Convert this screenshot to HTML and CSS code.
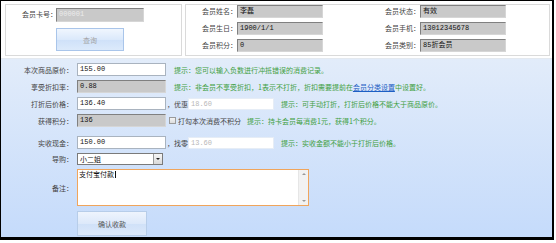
FILE: index.html
```html
<!DOCTYPE html>
<html>
<head>
  <meta charset="utf-8">
  <title>会员收款</title>
  <link rel="stylesheet" href="styles.css">
</head>
<body>
  <div class="frame">
    <div class="top">
      <div class="card-box">
        <span class="label">会员卡号：</span>
        <div class="field field-gray field-muted">000001</div>
        <button class="query-button">查询</button>
      </div>

      <div class="member-box">
        <div class="member-item">
          <span class="label">会员姓名：</span>
          <div class="field field-gray">李磊</div>
        </div>
        <div class="member-item">
          <span class="label">会员状态：</span>
          <div class="field field-gray">有效</div>
        </div>
        <div class="member-item">
          <span class="label">会员生日：</span>
          <div class="field field-gray">1900/1/1</div>
        </div>
        <div class="member-item">
          <span class="label">会员手机：</span>
          <div class="field field-gray">13012345678</div>
        </div>
        <div class="member-item">
          <span class="label">会员积分：</span>
          <div class="field field-gray">0</div>
        </div>
        <div class="member-item">
          <span class="label">会员类别：</span>
          <div class="field field-gray">85折会员</div>
        </div>
      </div>
    </div>

    <div class="pay">
      <div class="pay-row">
        <span class="pay-label">本次商品原价：</span>
        <div class="field field-white pay-input">155.00</div>
        <span class="hint">提示：您可以输入负数进行冲抵错误的消费记录。</span>
      </div>

      <div class="pay-row">
        <span class="pay-label">享受折扣率：</span>
        <div class="field field-gray pay-input">0.88</div>
        <span class="hint">提示：非会员不享受折扣，1表示不打折，折扣需要提前在<a href="#" class="hint-link">会员分类设置</a>中设置好。</span>
      </div>

      <div class="pay-row">
        <span class="pay-label">打折后价格：</span>
        <div class="field field-white pay-input">136.40</div>
        <span class="sub-label">，优惠</span>
        <div class="field field-plain sub-input">18.60</div>
        <span class="hint hint-far">提示：可手动打折，打折后价格不能大于商品原价。</span>
      </div>

      <div class="pay-row">
        <span class="pay-label">获得积分：</span>
        <div class="field field-gray pay-input">136</div>
        <span class="check-box"></span>
        <span class="check-text">打勾本次消费不积分</span>
        <span class="hint hint-check">提示：持卡会员每消费1元，获得1个积分。</span>
      </div>

      <div class="pay-row row-cash">
        <span class="pay-label">实收现金：</span>
        <div class="field field-white pay-input">150.00</div>
        <span class="sub-label">，找零</span>
        <div class="field field-plain sub-input">13.60</div>
        <span class="hint hint-far">提示：实收金额不能小于打折后价格。</span>
      </div>

      <div class="pay-row row-select">
        <span class="pay-label">导购：</span>
        <div class="select-box">
          <span class="select-text">小二姐</span>
          <span class="select-arrow"></span>
        </div>
      </div>

      <div class="pay-row row-memo">
        <span class="pay-label">备注：</span>
        <div class="memo">
          <span class="memo-text">支付宝付款<span class="caret"></span></span>
          <span class="memo-scroll">
            <span class="scroll-up"></span>
            <span class="scroll-down"></span>
          </span>
        </div>
      </div>

      <div class="pay-row row-button">
        <span class="pay-label"></span>
        <button class="confirm-button">确认收款</button>
      </div>
    </div>
  </div>
</body>
</html>
```

FILE: styles.css
```css
/* Page */
body {
  margin: 0;
  background-color: #fff;
  font-family: "Noto Sans CJK SC", "Noto Sans", sans-serif;
  font-size: 7px;
  color: #333;
}

/* Outer window frame */
.frame {
  box-sizing: border-box;
  width: 554px;
  height: 240px;
  border-style: solid;
  border-color: #000;
  border-width: 1px 2px 3px 1px;
  display: flex;
  flex-direction: column;
  background-color: #fff;
}

/* Top member area */
.top {
  height: 57px;
  box-sizing: border-box;
  padding: 3px 2px 0 4px;
  display: flex;
  gap: 3px;
}

.label {
  display: block;
  width: 34px;
  line-height: 13px;
  white-space: nowrap;
  color: #444;
}

/* Generic field */
.field {
  box-sizing: border-box;
  height: 13px;
  line-height: 11px;
  padding: 0 2px;
  font-family: "Liberation Mono", "Noto Sans CJK SC", monospace;
  font-size: 7px;
  color: #111;
  white-space: nowrap;
  overflow: hidden;
}

.field-gray {
  background-color: #c9c9c9;
  border: 1px solid;
  border-color: #808080 #d6d6d6 #d6d6d6 #808080;
}

.field-muted {
  color: #ececec;
}

.field-white {
  background-color: #fff;
  border: 1px solid #a9b3bf;
}

.field-plain {
  background-color: #fff;
  border: 1px solid #e6edf6;
  color: #b8b8b8;
}

/* Card search box */
.card-box {
  box-sizing: border-box;
  width: 177px;
  height: 52px;
  border: 1px solid #dadada;
  padding: 3px 0 0 16px;
  display: grid;
  grid-template-columns: 34px 88px;
  row-gap: 6px;
  align-content: start;
}

.card-box .field {
  height: 14px;
}

.query-button {
  grid-column: 2;
  width: 68px;
  height: 23px;
  padding: 0;
  border: 1px solid #a9c5ea;
  background: linear-gradient(#f0f6fe, #dbe9fb 50%, #cfe1f9 52%, #dceafb);
  font-family: "Noto Sans CJK SC", sans-serif;
  font-size: 7px;
  color: #a3a3a3;
}

/* Member info box */
.member-box {
  box-sizing: border-box;
  width: 365px;
  height: 52px;
  border: 1px solid #dadada;
  padding: 0 0 0 16px;
  display: grid;
  grid-template-columns: 121px 121px;
  column-gap: 62px;
  row-gap: 4px;
  align-content: start;
}

.member-item {
  display: flex;
  gap: 1px;
}

.member-item .field {
  width: 86px;
}

/* Payment area */
.pay {
  flex: 1;
  box-sizing: border-box;
  padding-top: 4px;
  background: linear-gradient(#e2ecfa, #c5dbfb);
  border-top: 1px solid #e4e9ef;
  display: flex;
  flex-direction: column;
  gap: 4px;
}

.pay-row {
  display: flex;
  align-items: center;
  height: 13px;
}

.pay-label {
  width: 72px;
  margin-right: 4px;
  text-align: right;
  white-space: nowrap;
  color: #444;
}

.pay-input {
  width: 89px;
}

.hint {
  margin-left: 8px;
  color: #3f9f3f;
  white-space: nowrap;
}

.hint-link {
  color: #1d5fc4;
  text-decoration: underline;
}

.hint-far {
  margin-left: 7px;
}

.hint-check {
  margin-left: 6px;
}

.sub-label {
  margin-left: 1px;
  white-space: nowrap;
  color: #444;
}

.sub-input {
  width: 86px;
  height: 12px;
}

.check-box {
  box-sizing: border-box;
  width: 7px;
  height: 7px;
  margin-left: 3px;
  border: 1px solid #9a9a9a;
  background: linear-gradient(#f4f4f4, #dcdcdc);
}

.check-text {
  margin-left: 2px;
  white-space: nowrap;
  color: #444;
}

.row-cash {
  margin-top: 5px;
}

/* Select */
.row-select {
  height: 12px;
}

.select-box {
  box-sizing: border-box;
  width: 86px;
  height: 12px;
  border: 1px solid #7a7a7a;
  background-color: #fff;
  display: flex;
  align-items: stretch;
}

.select-text {
  flex: 1;
  padding-left: 2px;
  line-height: 10px;
  color: #111;
}

.select-arrow {
  box-sizing: border-box;
  width: 9px;
  border-left: 1px solid #9a9a9a;
  background: linear-gradient(#f6f6f6, #d9d9d9);
  display: flex;
  align-items: center;
  justify-content: center;
}

.select-arrow::after {
  content: "";
  border-left: 2px solid transparent;
  border-right: 2px solid transparent;
  border-top: 2px solid #222;
}

/* Memo */
.row-memo {
  height: 37px;
}

.memo {
  box-sizing: border-box;
  width: 232px;
  height: 37px;
  border: 1px solid #f0a55c;
  background-color: #fff;
  display: flex;
}

.memo-text {
  flex: 1;
  padding: 0 1px;
  line-height: 9px;
  font-size: 7px;
  color: #111;
}

.caret {
  display: inline-block;
  width: 1px;
  height: 7px;
  margin-left: 1px;
  vertical-align: -1px;
  background-color: #111;
}

.memo-scroll {
  width: 9px;
  background-color: #f2f2f2;
  border-left: 1px solid #e6e6e6;
  display: flex;
  flex-direction: column;
  justify-content: space-between;
  align-items: center;
  padding: 3px 0;
}

.scroll-up {
  border-left: 2px solid transparent;
  border-right: 2px solid transparent;
  border-bottom: 2px solid #999;
}

.scroll-down {
  border-left: 2px solid transparent;
  border-right: 2px solid transparent;
  border-top: 2px solid #999;
}

/* Confirm button */
.row-button {
  height: 25px;
  margin-top: 1px;
}

.confirm-button {
  width: 70px;
  height: 25px;
  padding: 0;
  border: 1px solid #b7cde9;
  background: linear-gradient(#eef4fd, #dde9fa 50%, #d0e1f8 52%, #dbe8fa);
  font-family: "Noto Sans CJK SC", sans-serif;
  font-size: 7px;
  color: #555;
}
```
